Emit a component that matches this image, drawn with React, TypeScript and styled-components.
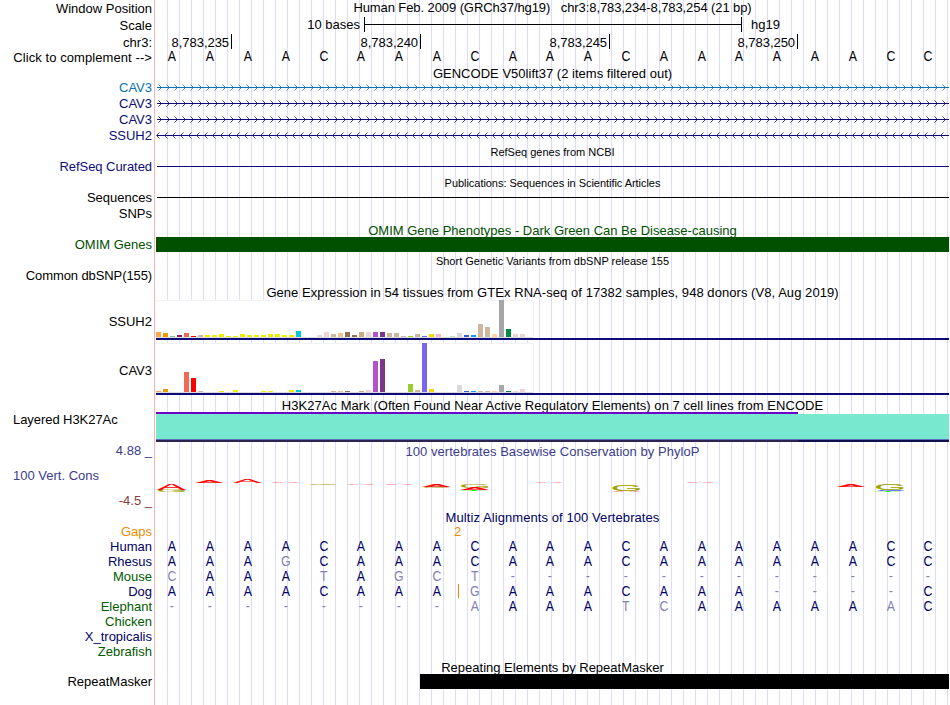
import React from "react";
import styled, { createGlobalStyle } from "styled-components";

const GlobalStyle = createGlobalStyle`
  body {
    margin: 0;
    background: #ffffff;
  }
`;

const Page = styled.div`
  width: 950px;
  height: 705px;
  overflow: hidden;
  display: flex;
  flex-direction: column;
  font-family: "Liberation Sans", Arial, sans-serif;
  font-size: 13px;
  line-height: 15px;
  color: #000000;
  white-space: pre;
  background: linear-gradient(#ffb4b4, #ffb4b4) 154px 0 / 1px 100% no-repeat,
    linear-gradient(#ffffff, #ffffff) 0 0 / 156px 100% no-repeat,
    linear-gradient(to right, #dcdcff 1px, transparent 1px) 11px 0 / 12px 100%;
`;

const Row = styled.div<{ $height: number }>`
  display: flex;
  flex: none;
  height: ${(props) => props.$height}px;
`;

const Label = styled.div<{
  $color?: string;
  $top?: number;
  $left?: boolean;
  $spacing?: number;
}>`
  flex: none;
  box-sizing: border-box;
  width: 156px;
  padding: ${(props) => props.$top || 0}px 4px 0 13px;
  text-align: ${(props) => (props.$left ? "left" : "right")};
  letter-spacing: ${(props) => props.$spacing || 0}px;
  color: ${(props) => props.$color || "#000000"};
`;

const Track = styled.div<{ $top?: number }>`
  flex: none;
  box-sizing: border-box;
  width: 793px;
  padding-top: ${(props) => props.$top || 0}px;
`;

const Title = styled.div<{ $color?: string; $small?: boolean; $spacing?: number }>`
  text-align: center;
  color: ${(props) => props.$color || "#000000"};
  font-size: ${(props) => (props.$small ? 11 : 13)}px;
  line-height: ${(props) => (props.$small ? 12 : 15)}px;
  letter-spacing: ${(props) => props.$spacing || 0}px;
`;

const ScaleTrack = styled(Track)`
  display: flex;
`;

const ScaleText = styled.div<{ $width?: number }>`
  width: ${(props) => (props.$width ? `${props.$width}px` : "auto")};
  text-align: right;
`;

const ScaleBar = styled.div`
  box-sizing: border-box;
  width: 378px;
  height: 15px;
  margin: 0 9px 0 4px;
  border: solid #000000;
  border-width: 0 1px;
  background: linear-gradient(#000000, #000000) 0 7px / 100% 1px no-repeat;
`;

const Tick = styled.div<{ $width: number }>`
  box-sizing: border-box;
  width: ${(props) => props.$width}px;
  height: 15px;
  padding: 1px 2px 0 0;
  border-right: 1px solid #000000;
  text-align: right;
  letter-spacing: -0.05px;
`;

const Bases = styled.div`
  display: grid;
  grid-template-columns: repeat(21, 37.8px);
  margin-left: -2.6px;
  text-align: center;
`;

const Base = styled.span<{ $color: string }>`
  height: 15px;
  font-size: 14px;
  transform: scaleX(0.88);
  color: ${(props) => props.$color};
`;

const Line = styled.div<{ $color: string }>`
  height: 1px;
  margin: 7px 0 0 1px;
  background: ${(props) => props.$color};
`;

const Block = styled.div<{ $color: string; $start?: number }>`
  height: 15px;
  margin-left: ${(props) => props.$start || 0}px;
  background: ${(props) => props.$color};
`;

const Expression = styled.div<{ $height: number }>`
  height: ${(props) => props.$height}px;
  border-bottom: 2px solid #0c0c78;
`;

const Chart = styled.div`
  box-sizing: border-box;
  display: flex;
  align-items: flex-end;
  gap: 2px;
  width: 378px;
  height: 100%;
  padding-bottom: 1px;
  background: linear-gradient(#dcdcdc, #dcdcdc) 0 100% / 100% 1px no-repeat,
    #ffffff;
  box-shadow: inset -1px 1px 0 #f2f2f2;
`;

const Bar = styled.div<{ $height: number; $color: string }>`
  width: 5px;
  flex: none;
  height: ${(props) => props.$height}px;
  background: ${(props) => props.$color};
`;

const Signal = styled.div`
  height: 25px;
  border-bottom: 1px solid #5f6fc0;
  background: #78e9ce;
`;

const SignalCap = styled.div`
  height: 2px;
  background: linear-gradient(#6e00c8, #6e00c8) 0 0 / 642px 100% no-repeat;
`;

const SignalBase = styled.div`
  height: 2px;
  background: linear-gradient(to right, #2c2450 642px, #10104c 642px);
`;

const Limits = styled.div`
  display: flex;
  flex-direction: column;
  width: 156px;
  box-sizing: border-box;
  padding-right: 4px;
  text-align: right;
`;

const Limit = styled.div<{ $color: string; $top?: number; $left?: boolean }>`
  margin-top: ${(props) => props.$top || 0}px;
  padding-left: 13px;
  text-align: ${(props) => (props.$left ? "left" : "right")};
  color: ${(props) => props.$color};
`;

const Insert = styled.div`
  width: 1px;
  height: 14px;
  margin: -15px 0 0 302px;
  background: #e68a00;
`;

const GapCount = styled.div`
  padding-left: 298px;
  color: #f08c00;
`;

const HUMAN = "AAAACAAACAAACAAAAAACC";

const ALIGNMENTS = [
  { name: "Human", color: "#000064", bases: HUMAN },
  { name: "Rhesus", color: "#000064", bases: "AAAGCAAACAAACAAAAAACC" },
  { name: "Mouse", color: "#005a00", bases: "CAAATAGCT------------" },
  { name: "Dog", color: "#000064", bases: "AAAACAAAGAAACAAA----C", insert: true },
  { name: "Elephant", color: "#005a00", bases: "--------AAAATCAAAAAAC" },
  { name: "Chicken", color: "#005a00", bases: "" },
  { name: "X_tropicalis", color: "#000064", bases: "" },
  { name: "Zebrafish", color: "#005a00", bases: "" },
];

const TISSUES = (
  "ffa54f ee9a00 8fbc8f 8b1c62 ee6a50 ff0000 cdb79e eeee00 eeee00 eeee00 eeee00 " +
  "eeee00 eeee00 eeee00 eeee00 eeee00 eeee00 eeee00 eeee00 eeee00 00cdcd eed5d2 " +
  "eed5d2 eed5d2 eed5d2 cdb79e eec591 8b7355 8b7355 cdaa7d eed5d2 b452cd 7a378b " +
  "cdb79e cdb79e cdb79e 9acd32 cdb79e 7a67ee ffd700 ffb6c1 cd9b1d b4eeb4 d9d9d9 " +
  "3a5fcd 1e90ff cdb79e cdb79e ffd39b a6a6a6 008b45 eed5d2 eed5d2 ff00ff"
).split(" ");

const SSUH2 = [
  5, 4, 1, 2, 4, 1, 2, 2, 2, 3, 1, 1, 3, 2, 2, 2, 3, 3, 2, 2, 6, 0, 0, 2, 5, 3, 4,
  5, 2, 5, 5, 5, 5, 4, 4, 1, 1, 3, 1, 3, 3, 0, 1, 4, 2, 2, 13, 10, 3, 37, 8, 3, 3, 0,
];

const CAV3 = [
  1, 3, 0, 0, 20, 14, 1, 0, 0, 1, 0, 2, 0, 0, 0, 1, 1, 0, 0, 2, 2, 0, 0, 0, 0, 1, 1,
  1, 0, 1, 2, 31, 33, 0, 0, 0, 8, 2, 49, 3, 0, 0, 0, 7, 1, 1, 1, 1, 1, 7, 1, 1, 3, 0,
];

// letter, centre x, top, bottom
const LOGO: [string, number, number, number][] = [
  ["G", 16, 31, 33],
  ["A", 15.5, 25, 31],
  ["A", 53.5, 22, 24],
  ["A", 91.5, 20, 24],
  ["A", 129.5, 23, 24],
  ["G", 167.5, 25, 26],
  ["A", 205, 25, 26],
  ["A", 243, 25, 26],
  ["A", 280.5, 25, 28],
  ["G", 281, 28, 29],
  ["G", 319, 25, 29],
  ["A", 319, 29, 31],
  ["T", 318, 31, 32],
  ["A", 393, 23, 24],
  ["G", 470.5, 25, 32],
  ["A", 470.5, 32, 33],
  ["A", 544.5, 23, 24],
  ["A", 695, 25, 28],
  ["G", 734, 25, 31],
  ["C", 735, 31, 32],
  ["T", 732, 32, 33],
];

const LETTERS: Record<string, { color: string; width: number }> = {
  A: { color: "#ff0000", width: 6.6 },
  C: { color: "#0000ff", width: 6.5 },
  G: { color: "#a0a000", width: 6.9 },
  T: { color: "#00ff00", width: 5.8 },
};

const ConservationLogo: React.FC = () => (
  <svg width="793" height="50" viewBox="0 0 793 50" display="block">
    {LOGO.map(([letter, x, top, bottom], i) => (
      <text
        key={i}
        fontSize="10"
        textAnchor="middle"
        fill={LETTERS[letter].color}
        stroke={LETTERS[letter].color}
        strokeWidth={bottom - top > 2 ? 0.4 : 0.2}
        vectorEffect="non-scaling-stroke"
        transform={`translate(${x} ${bottom}) scale(${
          28 / LETTERS[letter].width
        } ${(bottom - top) / 7.1})`}
      >
        {letter}
      </text>
    ))}
  </svg>
);

interface IGeneProps {
  name: string;
  color: string;
  reverse?: boolean;
}

const Gene: React.FC<IGeneProps> = ({ name, color, reverse }) => {
  const arrows = Array.from({ length: 99 }, (_, i) =>
    reverse
      ? `M${i * 8 + 3.5} 4.5l-3 3l3 3`
      : `M${i * 8 + 2.5} 4.5l3 3l-3 3`
  ).join("");
  return (
    <Row $height={16}>
      <Label $color={color}>{name}</Label>
      <Track>
        <svg width="793" height="16" display="block" fill="none" stroke={color}>
          <path d="M1 7.5H793" />
          <path d={arrows} strokeWidth="0.8" />
        </svg>
      </Track>
    </Row>
  );
};

interface ITitleRowProps {
  height: number;
  top?: number;
  color?: string;
  small?: boolean;
  spacing?: number;
  label?: string;
  children: string;
}

const TitleRow: React.FC<ITitleRowProps> = (props) => (
  <Row $height={props.height}>
    <Label $top={1}>{props.label}</Label>
    <Track $top={props.top}>
      <Title $color={props.color} $small={props.small} $spacing={props.spacing}>
        {props.children}
      </Title>
    </Track>
  </Row>
);

const BaseRow: React.FC<{ bases: string; plain?: boolean }> = ({ bases, plain }) => (
  <Bases>
    {bases.split("").map((base, i) => (
      <Base
        key={i}
        $color={plain ? "#000000" : base === HUMAN[i] ? "#000064" : "#8282b4"}
      >
        {base}
      </Base>
    ))}
  </Bases>
);

const TissueChart: React.FC<{ values: number[]; height: number }> = (props) => (
  <Expression $height={props.height}>
    <Chart>
      {props.values.map((value, i) => (
        <Bar key={i} $height={value} $color={`#${TISSUES[i]}`} />
      ))}
    </Chart>
  </Expression>
);

const App: React.FC = () => (
  <>
    <GlobalStyle />
    <Page>
      <TitleRow height={17} label="Window Position" spacing={-0.09}>
        {"Human Feb. 2009 (GRCh37/hg19)   chr3:8,783,234-8,783,254 (21 bp)"}
      </TitleRow>
      <Row $height={17}>
        <Label $top={1}>Scale</Label>
        <ScaleTrack>
          <ScaleText $width={204}>10 bases</ScaleText>
          <ScaleBar />
          <ScaleText>hg19</ScaleText>
        </ScaleTrack>
      </Row>
      <Row $height={15}>
        <Label $top={1}>chr3:</Label>
        <ScaleTrack>
          <Tick $width={76}>8,783,235</Tick>
          <Tick $width={189}>8,783,240</Tick>
          <Tick $width={189}>8,783,245</Tick>
          <Tick $width={188}>8,783,250</Tick>
        </ScaleTrack>
      </Row>
      <Row $height={17}>
        <Label $top={1} $spacing={0.08}>
          {"Click to complement -->"}
        </Label>
        <Track>
          <BaseRow bases={HUMAN} plain />
        </Track>
      </Row>
      <TitleRow height={14} spacing={0.02}>
        GENCODE V50lift37 (2 items filtered out)
      </TitleRow>
      <Gene name="CAV3" color="#0c72b4" />
      <Gene name="CAV3" color="#0c0c78" />
      <Gene name="CAV3" color="#0c0c78" />
      <Gene name="SSUH2" color="#0c0c78" reverse />
      <TitleRow height={15} top={2} small>
        RefSeq genes from NCBI
      </TitleRow>
      <Row $height={16}>
        <Label $color="#0c0c78" $spacing={-0.05}>
          RefSeq Curated
        </Label>
        <Track>
          <Line $color="#0c0c78" />
        </Track>
      </Row>
      <TitleRow height={15} top={2} small spacing={-0.04}>
        Publications: Sequences in Scientific Articles
      </TitleRow>
      <Row $height={16}>
        <Label>Sequences</Label>
        <Track>
          <Line $color="#000000" />
        </Track>
      </Row>
      <Row $height={17}>
        <Label>SNPs</Label>
      </Row>
      <TitleRow height={14} color="#005000">
        OMIM Gene Phenotypes - Dark Green Can Be Disease-causing
      </TitleRow>
      <Row $height={16}>
        <Label $color="#005000">OMIM Genes</Label>
        <Track>
          <Block $color="#005000" />
        </Track>
      </Row>
      <TitleRow height={15} top={2} small>
        Short Genetic Variants from dbSNP release 155
      </TitleRow>
      <Row $height={17}>
        <Label $spacing={-0.1}>Common dbSNP(155)</Label>
      </Row>
      <TitleRow height={15} spacing={0.055}>
        Gene Expression in 54 tissues from GTEx RNA-seq of 17382 samples, 948 donors (V8, Aug 2019)
      </TitleRow>
      <Row $height={43}>
        <Label $top={14}>SSUH2</Label>
        <Track>
          <TissueChart values={SSUH2} height={38} />
        </Track>
      </Row>
      <Row $height={55}>
        <Label $top={20}>CAV3</Label>
        <Track>
          <TissueChart values={CAV3} height={50} />
        </Track>
      </Row>
      <TitleRow height={14} spacing={0.045}>
        H3K27Ac Mark (Often Found Near Active Regulatory Elements) on 7 cell lines from ENCODE
      </TitleRow>
      <Row $height={31}>
        <Label $left $spacing={-0.06}>
          Layered H3K27Ac
        </Label>
        <Track>
          <SignalCap />
          <Signal />
          <SignalBase />
        </Track>
      </Row>
      <Row $height={67}>
        <Limits>
          <Limit $color="#3c3c8c">4.88 _</Limit>
          <Limit $color="#3c3c8c" $top={10} $left>
            100 Vert. Cons
          </Limit>
          <Limit $color="#8c3c3c" $top={10}>
            -4.5 _
          </Limit>
        </Limits>
        <Track $top={1}>
          <Title $color="#3c3c8c" $spacing={0.04}>
            100 vertebrates Basewise Conservation by PhyloP
          </Title>
          <ConservationLogo />
        </Track>
      </Row>
      <TitleRow height={14} color="#000064" spacing={0.08}>
        Multiz Alignments of 100 Vertebrates
      </TitleRow>
      <Row $height={15}>
        <Label $color="#f08c00">Gaps</Label>
        <GapCount>2</GapCount>
      </Row>
      {ALIGNMENTS.map((row) => (
        <Row key={row.name} $height={15}>
          <Label $color={row.color}>{row.name}</Label>
          <Track>
            <BaseRow bases={row.bases} />
            {row.insert && <Insert />}
          </Track>
        </Row>
      ))}
      <TitleRow height={15} top={1}>
        Repeating Elements by RepeatMasker
      </TitleRow>
      <Row $height={31}>
        <Label>RepeatMasker</Label>
        <Track>
          <Block $color="#000000" $start={264} />
        </Track>
      </Row>
    </Page>
  </>
);

export default App;
